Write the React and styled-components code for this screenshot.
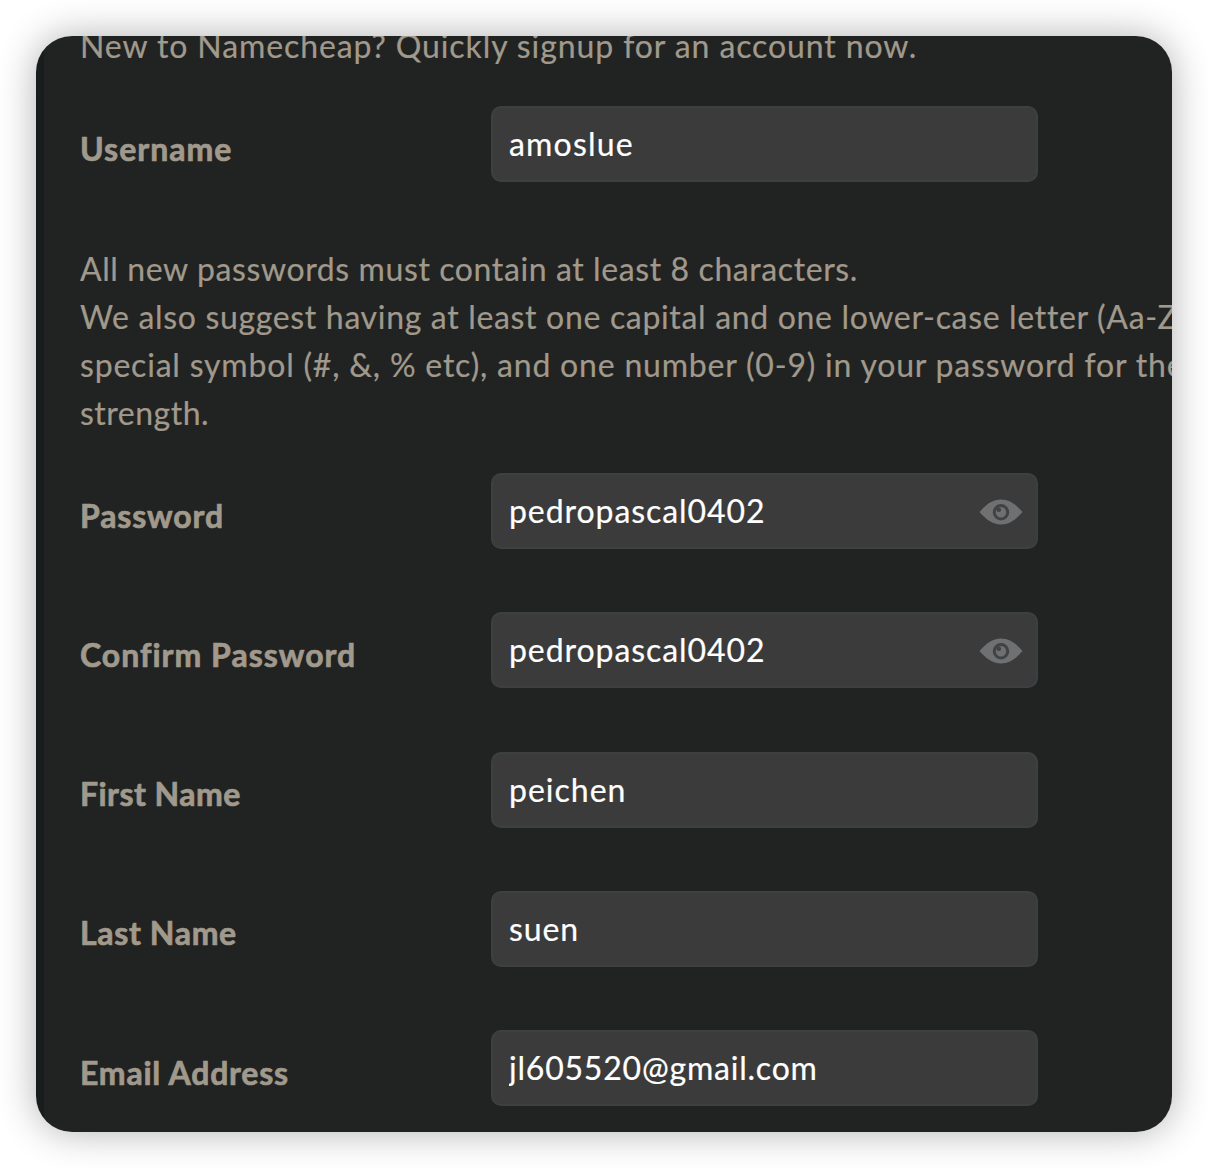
import React from "react";
import styled, { createGlobalStyle } from "styled-components";

const GlobalStyle = createGlobalStyle`
  * { box-sizing: border-box; }
  body {
    margin: 0;
    background: #fff;
    font-family: Lato, "Open Sans", sans-serif;
  }
`;

const Page = styled.main`
  width: 1208px;
  height: 1168px;
  padding: 36px;
`;

const Card = styled.section`
  height: 1096px;
  border-radius: 36px;
  overflow: hidden;
  background: linear-gradient(to right, #181c1c 8px, #212322 8px);
  box-shadow: 0 0 38px rgba(0, 0, 0, 0.31);
`;

const Form = styled.form`
  display: flex;
  flex-direction: column;
  gap: 37px;
  margin-top: -15px;
  padding-left: 44px;
`;

const Copy = styled.p`
  margin: ${(p) => (p.$spaced ? "26px 0 -1px" : "1px 0 -1px")};
  color: #a0998c;
  font-size: 32px;
  line-height: 48px;
  white-space: nowrap;
  -webkit-text-stroke: 0.2px #a0998c;
`;

const Line = styled.span`
  display: block;
  letter-spacing: ${(p) => p.$tracking}px;
`;

const Fields = styled.div`
  display: flex;
  flex-direction: column;
  gap: 63.3px;
`;

const Row = styled.div`
  display: grid;
  grid-template-columns: 411px 547px;
  height: 76px;
`;

const Label = styled.label`
  display: flex;
  align-items: center;
  padding-top: 8px;
  color: #a0998c;
  font-size: 32px;
  font-weight: 700;
  letter-spacing: ${(p) => p.$tracking}px;
  white-space: nowrap;
  -webkit-text-stroke: 0.7px #a0998c;
`;

const Box = styled.div`
  display: flex;
  align-items: center;
  height: 76px;
  padding: 0 13px 0 16px;
  border: 2px solid #3c4043;
  border-radius: 10px;
  background: #3b3b3b;
`;

const Input = styled.input`
  flex: 1;
  min-width: 0;
  height: 100%;
  padding: 0 0 1px;
  border: 0;
  outline: 0;
  background: transparent;
  color: #fff;
  font: 400 32px Lato, "Open Sans", sans-serif;
  letter-spacing: ${(p) => p.$tracking}px;
  -webkit-text-stroke: 0.2px #fff;
`;

const EyeIcon = styled.svg`
  flex: none;
  width: 44px;
  height: 28px;
  margin-top: 2px;
`;

function Eye() {
  return (
    <EyeIcon viewBox="0 0 44 28" aria-hidden="true">
      <path
        d="M.5 14C7 6.500 13.500 1.500 22 1.500s15 5 21.500 12.500C37 21.500 30.500 26.500 22 26.500S7 21.500 .5 14Z"
        fill="#6f7072"
      />
      <circle cx="22" cy="14.300" r="8.200" fill="#414243" />
      <circle cx="22" cy="14.300" r="5.200" fill="#6f7072" />
      <circle cx="19.800" cy="11.800" r="2.300" fill="#414243" />
    </EyeIcon>
  );
}

function Field({ id, label, labelTracking, value, tracking, secret }) {
  return (
    <Row>
      <Label htmlFor={id} $tracking={labelTracking}>{label}</Label>
      <Box>
        <Input id={id} defaultValue={value} $tracking={tracking} spellCheck={false} />
        {secret && <Eye />}
      </Box>
    </Row>
  );
}

const account = [
  { id: "password", label: "Password", labelTracking: 0.85, value: "pedropascal0402", tracking: 0.93, secret: true },
  { id: "confirm", label: "Confirm Password", labelTracking: 1, value: "pedropascal0402", tracking: 0.93, secret: true },
  { id: "first", label: "First Name", labelTracking: 0.45, value: "peichen", tracking: 1 },
  { id: "last", label: "Last Name", labelTracking: 0.65, value: "suen", tracking: 0.9 },
  { id: "email", label: "Email Address", labelTracking: 0.78, value: "jl605520@gmail.com", tracking: 0.79 },
];

export default function App() {
  return (
    <Page>
      <GlobalStyle />
      <Card>
        <Form>
          <Copy>
            <Line $tracking={0.9}>New to Namecheap? Quickly signup for an account now.</Line>
          </Copy>
          <Field id="username" label="Username" labelTracking={1} value="amoslue" tracking={1.2} />
          <Copy $spaced>
            <Line $tracking={0.6}>All new passwords must contain at least 8 characters.</Line>
            <Line $tracking={0.67}>We also suggest having at least one capital and one lower-case letter (Aa-Z), one</Line>
            <Line $tracking={0.8}>special symbol (#, &amp;, % etc), and one number (0-9) in your password for the best</Line>
            <Line $tracking={0.5}>strength.</Line>
          </Copy>
          <Fields>
            {account.map((field) => (
              <Field key={field.id} {...field} />
            ))}
          </Fields>
        </Form>
      </Card>
    </Page>
  );
}
